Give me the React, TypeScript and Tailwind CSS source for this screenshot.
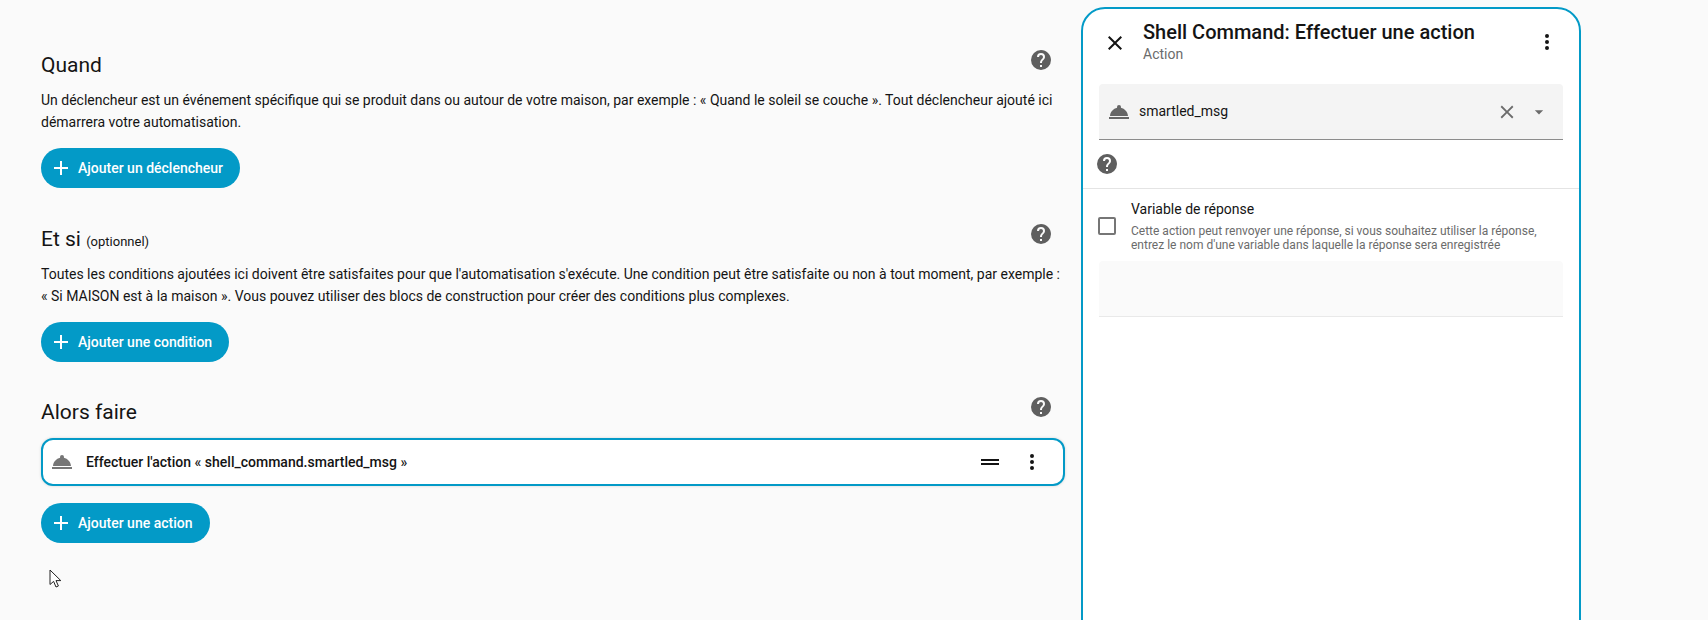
const P = {
  service: "M2,17H22V19H2V17M13.84,7.79C13.94,7.55 14,7.28 14,7A2,2 0 0,0 12,5A2,2 0 0,0 10,7C10,7.28 10.06,7.55 10.16,7.79C6.25,8.6 3.27,11.93 3,16H21C20.73,11.93 17.75,8.6 13.84,7.79Z",
  help: "M15.07,11.25L14.17,12.17C13.45,12.89 13,13.5 13,15H11V14.5C11,13.39 11.45,12.39 12.17,11.67L13.41,10.41C13.78,10.05 14,9.55 14,9C14,7.89 13.1,7 12,7A2,2 0 0,0 10,9H8A4,4 0 0,1 12,5A4,4 0 0,1 16,9C16,9.88 15.64,10.67 15.07,11.25M13,19H11V17H13M12,2A10,10 0 0,0 2,12A10,10 0 0,0 12,22A10,10 0 0,0 22,12C22,6.47 17.5,2 12,2Z",
  plus: "M19,13H13V19H11V13H5V11H11V5H13V11H19V13Z",
  close: "M19,6.41L17.59,5L12,10.59L6.41,5L5,6.41L10.59,12L5,17.59L6.41,19L12,13.41L17.59,19L19,17.59L13.41,12L19,6.41Z",
  dots: "M12,16A2,2 0 0,1 14,18A2,2 0 0,1 12,20A2,2 0 0,1 10,18A2,2 0 0,1 12,16M12,10A2,2 0 0,1 14,12A2,2 0 0,1 12,14A2,2 0 0,1 10,12A2,2 0 0,1 12,10M12,4A2,2 0 0,1 14,6A2,2 0 0,1 12,8A2,2 0 0,1 10,6A2,2 0 0,1 12,4Z",
  drag: "M21 11H3V9H21V11M21 13H3V15H21V13Z",
  down: "M7,10L12,15L17,10H7Z",
};

function Icon({ d, className }: { d: string; className: string }) {
  return (
    <svg viewBox="0 0 24 24" className={className} fill="currentColor" aria-hidden="true">
      <path d={d} />
    </svg>
  );
}

function AddButton({ label }: { label: string }) {
  return (
    <button className="flex h-10 items-center rounded-[20px] bg-[#039ac7] pl-2 pr-[17px] text-[14px] font-medium text-white">
      <Icon d={P.plus} className="mr-[5px] h-6 w-6" />
      {label}
    </button>
  );
}

function Header({ children }: { children: React.ReactNode }) {
  return (
    <div className="flex h-8 items-start justify-between">
      <h2 className="text-[21px] leading-8 font-normal text-[#141414]">{children}</h2>
      <Icon d={P.help} className="-mt-px mr-[12px] h-6 w-6 text-[#5f5f5f]" />
    </div>
  );
}

export default function App() {
  return (
    <div className="flex h-[620px] overflow-hidden bg-[#fafafa] font-['Roboto',sans-serif] text-[#141414]">
      <main className="w-[1081px] shrink-0 pt-[49px] pl-[41px] pr-[16px]">
        <section className="mb-[35px]">
          <Header>Quand</Header>
          <p className="mt-2 text-[14px] leading-[22px]">
            Un déclencheur est un événement spécifique qui se produit dans ou autour de votre maison, par exemple : « Quand le soleil se couche ». Tout déclencheur ajouté ici démarrera votre automatisation.
          </p>
          <div className="mt-[15px] flex"><AddButton label="Ajouter un déclencheur" /></div>
        </section>
        <section className="mb-[34px]">
          <Header>
            Et si <span className="text-[13px]">(optionnel)</span>
          </Header>
          <p className="mt-2 text-[14px] leading-[22px]">
            Toutes les conditions ajoutées ici doivent être satisfaites pour que l'automatisation s'exécute. Une condition peut être satisfaite ou non à tout moment, par exemple : « Si MAISON est à la maison ». Vous pouvez utiliser des blocs de construction pour créer des conditions plus complexes.
          </p>
          <div className="mt-[15px] flex"><AddButton label="Ajouter une condition" /></div>
        </section>
        <section>
          <Header>Alors faire</Header>
          <div className="mt-[10px] flex h-12 items-center rounded-xl border-2 border-[#039ac7] bg-white pl-[7px] shadow-[0_0_3px_rgba(0,0,0,0.15)]">
            <Icon d={P.service} className="h-6 w-6 text-[#767676]" />
            <span className="ml-[12px] flex-1 text-[14px] font-medium">Effectuer l'action « shell_command.smartled_msg »</span>
            <Icon d={P.drag} className="h-6 w-6 text-[#141414]" />
            <Icon d={P.dots} className="mr-[19px] ml-[18px] h-6 w-6 text-[#141414]" />
          </div>
          <div className="mt-[17px] flex"><AddButton label="Ajouter une action" /></div>
        </section>
      </main>

      <aside className="mt-[7px] h-[640px] w-[500px] shrink-0 rounded-t-3xl border-2 border-[#039ac7] bg-white">
        <header className="flex h-[75px] items-start">
          <Icon d={P.close} className="mt-[22px] ml-[20px] h-6 w-6 text-[#141414]" />
          <div className="mt-[11px] ml-[16px] flex-1">
            <div className="text-[20px] leading-6 font-medium">Shell Command: Effectuer une action</div>
            <div className="text-[14px] leading-5 text-[#6b6b6b]">Action</div>
          </div>
          <Icon d={P.dots} className="mt-[21px] mr-[20px] h-6 w-6 text-[#141414]" />
        </header>
        <div className="mx-4 flex h-[56px] items-center rounded-t border-b border-[#8c8c8c] bg-[#f4f4f4] pl-2">
          <Icon d={P.service} className="h-6 w-6 text-[#666666]" />
          <span className="ml-2 flex-1 text-[14px]">smartled_msg</span>
          <Icon d={P.close} className="h-5.5 w-5.5 text-[#6b6b6b]" />
          <Icon d={P.down} className="mr-[14px] ml-[11px] h-5 w-5 text-[#6b6b6b]" />
        </div>
        <div className="flex h-[49px] items-start border-b border-[#e4e4e4] pl-[12px] pt-[12px]">
          <Icon d={P.help} className="h-6 w-6 text-[#5f5f5f]" />
        </div>
        <div className="flex items-center pl-[15px] pt-[10px]">
          <div className="h-[18px] w-[18px] rounded-[2px] border-2 border-[#767676]" />
          <div className="ml-[15px]">
            <div className="text-[14px] leading-5">Variable de réponse</div>
            <div className="mt-[5px] text-[12px] leading-[14px] text-[#6b6b6b]">
              Cette action peut renvoyer une réponse, si vous souhaitez utiliser la réponse,<br />
              entrez le nom d'une variable dans laquelle la réponse sera enregistrée
            </div>
          </div>
        </div>
        <div className="mx-4 mt-[9px] h-[56px] rounded-t border-b border-[#e9e9e9] bg-[#fafafa]" />
      </aside>

      <svg viewBox="0 0 14 20" className="absolute top-[569px] left-[49px] h-5 w-[14px]" aria-hidden="true">
        <path d="M1 1V15.5L4.6 12.4L7 18L9.4 17L7 11.6H11.8Z" fill="#fff" stroke="#222" strokeWidth="1" />
      </svg>
    </div>
  );
}
